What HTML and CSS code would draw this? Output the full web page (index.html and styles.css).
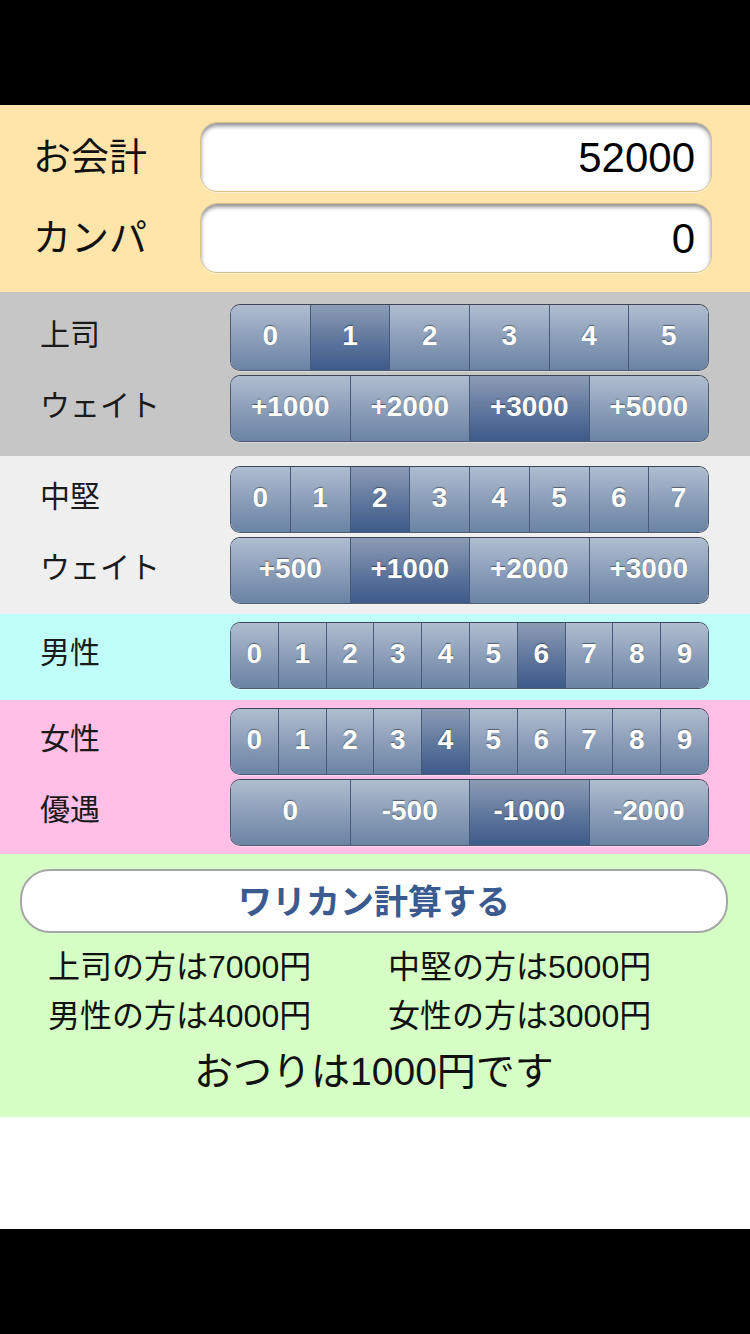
FILE: index.html
```html
<!DOCTYPE html>
<html>
<head>
<meta http-equiv="Content-Type" content="text/html; charset=utf-8" />
<title>ワリカン</title>
<link rel="stylesheet" href="styles.css">
</head>

<body>
<div class="bar"></div>

<div class="sec sec-bill">
	<div class="field-row">
		<span class="field-label">お会計</span>
		<div class="field">52000</div>
	</div>
	<div class="field-row">
		<span class="field-label">カンパ</span>
		<div class="field">0</div>
	</div>
</div>

<div class="sec sec-boss">
	<div class="row">
		<span class="label">上司</span>
		<ul class="seg">
			<li>0</li><li class="on">1</li><li>2</li><li>3</li><li>4</li><li>5</li>
		</ul>
	</div>
	<div class="row">
		<span class="label">ウェイト</span>
		<ul class="seg">
			<li>+1000</li><li>+2000</li><li class="on">+3000</li><li>+5000</li>
		</ul>
	</div>
</div>

<div class="sec sec-mid">
	<div class="row">
		<span class="label">中堅</span>
		<ul class="seg">
			<li>0</li><li>1</li><li class="on">2</li><li>3</li><li>4</li><li>5</li><li>6</li><li>7</li>
		</ul>
	</div>
	<div class="row">
		<span class="label">ウェイト</span>
		<ul class="seg">
			<li>+500</li><li class="on">+1000</li><li>+2000</li><li>+3000</li>
		</ul>
	</div>
</div>

<div class="sec sec-men">
	<div class="row">
		<span class="label">男性</span>
		<ul class="seg">
			<li>0</li><li>1</li><li>2</li><li>3</li><li>4</li><li>5</li><li class="on">6</li><li>7</li><li>8</li><li>9</li>
		</ul>
	</div>
</div>

<div class="sec sec-women">
	<div class="row">
		<span class="label">女性</span>
		<ul class="seg">
			<li>0</li><li>1</li><li>2</li><li>3</li><li class="on">4</li><li>5</li><li>6</li><li>7</li><li>8</li><li>9</li>
		</ul>
	</div>
	<div class="row">
		<span class="label">優遇</span>
		<ul class="seg">
			<li>0</li><li>-500</li><li class="on">-1000</li><li>-2000</li>
		</ul>
	</div>
</div>

<div class="sec sec-result">
	<div class="calc-btn">ワリカン計算する</div>
	<div class="result-grid">
		<span>上司の方は7000円</span><span>中堅の方は5000円</span>
		<span>男性の方は4000円</span><span>女性の方は3000円</span>
	</div>
	<p class="change">おつりは1000円です</p>
</div>

<div class="blank"></div>
<div class="bar"></div>
</body>
</html>
```

FILE: styles.css
```css
*{ margin:0; padding:0; box-sizing:border-box;}
li{ list-style:none;}
body{ background:#fff; font-family:"Liberation Sans","Noto Sans CJK JP",sans-serif; color:#111;}

.bar{ height:105px; background:#000;}
.blank{ height:112px; background:#fff;}

.sec-bill{ background:#ffe5aa; padding:17px 38px 19px 33px; display:flex; flex-direction:column; gap:11px;}
.field-row{ display:flex; align-items:center;}
.field-label{ width:167px; font-size:38px; line-height:1;}
.field{ flex:1; height:70px; background:#fff; border:1px solid #d9c187; border-radius:17px;
	box-shadow:inset 0 3px 4px rgba(0,0,0,.45), 0 1px 0 rgba(255,255,255,.5);
	font-size:42px; line-height:70px; text-align:right; padding-right:16px; color:#000;}

.sec-boss{ background:#c6c6c6; padding:12px 41px 14px 40px;}
.sec-mid{ background:#efefef; padding:10px 41px 10px 40px;}
.sec-men{ background:#c0fff9; padding:8px 41px 11px 40px;}
.sec-women{ background:#ffbfe6; padding:8px 41px 8px 40px;}
.sec-boss, .sec-mid, .sec-women{ display:flex; flex-direction:column; gap:4px;}

.row{ display:flex; align-items:center;}
.label{ width:190px; font-size:30px; line-height:1; color:#1a1a1a; padding-bottom:6px;}

.seg{ flex:1; display:flex; height:67px; border:1px solid #4d5c72; border-radius:10px; overflow:hidden;
	box-shadow:0 1px 0 rgba(255,255,255,.35); border-top-color:#3a4556;}
.seg li{ flex:1; display:flex; align-items:center; justify-content:center;
	border-left:1px solid #475a7a;
	background:linear-gradient(#b0bdd0,#8c9fb9 50%,#6b83a4);
	font-weight:bold; font-size:28px; color:#fff; text-shadow:0 -1px 1px rgba(0,0,0,.45);
	padding-bottom:3px;}
.seg li:first-child{ border-left:none;}
.seg li.on{ background:linear-gradient(#8c9cb6,#62799e 50%,#3d5a8a);}

.sec-result{ background:#d5ffc4; padding:15px 22px 20px 20px;}
.calc-btn{ height:64px; background:#fff; border:2px solid #a6a6a6; border-radius:30px;
	text-align:center; line-height:58px; font-size:34px; font-weight:bold; color:#3b5a8f;
	font-family:"Noto Sans CJK JP",sans-serif;}
.result-grid{ display:grid; grid-template-columns:340px auto; margin-top:10px; padding-left:28px;
	font-size:32px; line-height:49px; color:#111;}
.change{ margin-top:6px; text-align:center; font-size:39px; line-height:50px; color:#111;}
```
